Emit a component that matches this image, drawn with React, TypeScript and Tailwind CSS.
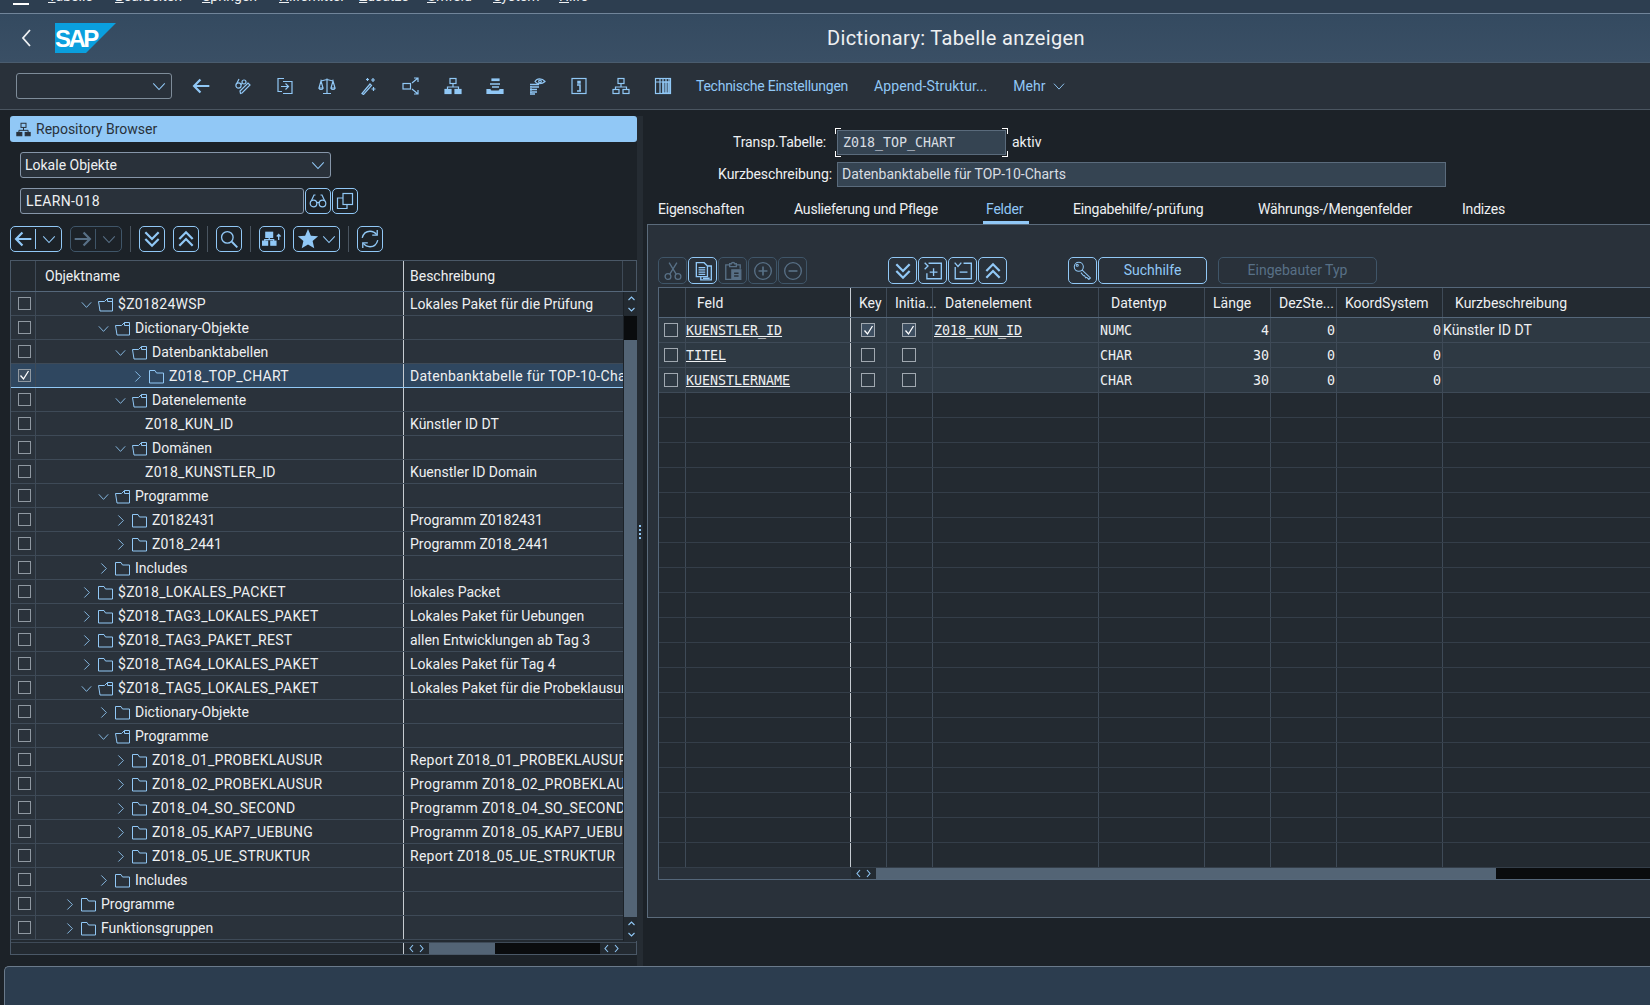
import type { ReactNode } from 'react';

const Svg = ({ children, size = 18, className = '' }: { children: ReactNode; size?: number; className?: string }) => (
  <svg width={size} height={size} viewBox="0 0 18 18" fill="none" stroke="currentColor" strokeWidth="1.2" className={className}>
    {children}
  </svg>
);

const ChevronDown = ({ size = 16 }: { size?: number }) => (
  <Svg size={size}><path d="M2.500 6 9 13l6.500-7" /></Svg>
);
const ChevronRight = () => (
  <Svg size={13}><path d="M6 2l7 7-7 7" /></Svg>
);
const ArrowBack = () => (
  <Svg size={20}><path d="M16.500 9H3M8.500 3.200 2.800 9l5.700 5.800" strokeWidth="2" /></Svg>
);
const ArrowForward = () => (
  <Svg size={20}><path d="M1.500 9H15M9.500 3.200 15.200 9l-5.700 5.800" strokeWidth="2" /></Svg>
);
const DoubleDown = () => (
  <Svg size={20}><path d="M3 3l6 6 6-6M3 9l6 6 6-6" strokeWidth="2" /></Svg>
);
const DoubleUp = () => (
  <Svg size={20}><path d="M3 9l6-6 6 6M3 15l6-6 6 6" strokeWidth="2" /></Svg>
);

const GlassesPencil = () => (
  <Svg>
    <circle cx="4.500" cy="8.500" r="2.600" /><circle cx="10" cy="5" r="2" />
    <path d="M3 6 5 2M7 7.500l1-1M6.500 16.500l1.500-.5 8-8-2-2-8 8z" />
  </Svg>
);
const DocArrow = () => (
  <Svg>
    <path d="M8 1.500H2v13h4M7 4.500h9v12H7" /><path d="M5 9.500h7M9.500 6.500l3 3-3 3" />
  </Svg>
);
const Scales = () => (
  <Svg>
    <path d="M9 1.500V16M5 16.500h8M3 4l6-1.500L15 4M3 4 1 11h4zM15 4l-2 7h4z" />
    <path d="M1 11c.5 2 3.500 2 4 0M13 11c.5 2 3.500 2 4 0" />
  </Svg>
);
const Wand = () => (
  <Svg>
    <path d="M2 16.500 10 7l1.500 1.500-8 9z" />
    <path d="M6 2.500h3M7.500 1v3M13 1v4M11 3h4M13.500 10v4M11.500 12h4" />
  </Svg>
);
const BoxArrows = () => (
  <Svg>
    <rect x="1" y="6.500" width="7.500" height="5.500" /><path d="M10 6l6-5M12 1h4v4M10 12l6 5M12 17h4v-4" />
  </Svg>
);
const Hierarchy = ({ filled = true, size = 18 }: { filled?: boolean; size?: number }) => (
  <Svg size={size}>
    <rect x="6" y="1.500" width="6" height="5" />
    <path d="M9 6.500V10M3.500 12.500V10h11v2.500" />
    <rect x="1" y="12.500" width="6" height="4" fill={filled ? 'currentColor' : 'none'} />
    <rect x="11" y="12.500" width="6" height="4" fill={filled ? 'currentColor' : 'none'} />
  </Svg>
);
const Stack = () => (
  <Svg>
    <rect x="6" y="2" width="7" height="1.500" fill="currentColor" />
    <path d="M4 7h10M6 10h7" strokeWidth="1.600" />
    <path d="M1 12.500h3l1 1.500h8l1-1.500h3V16.500H1z" fill="currentColor" />
  </Svg>
);
const EyeList = () => (
  <Svg>
    <path d="M7 4.500c2-3.500 7-3.500 10 0-3 3-8 3-10 0z" /><circle cx="12" cy="4.500" r="1.300" />
    <path d="M2 7.500h9M2 10h9M2 12.500h7M2 15h7M2 17h5" strokeWidth="1.300" />
    <path d="M3 7v10" strokeDasharray="1 1" />
  </Svg>
);
const InfoBox = () => (
  <Svg>
    <rect x="2" y="1.500" width="14" height="15" />
    <path d="M8 4.500h2v1.500H8zM7 8h3v5.500M7 14h4" strokeWidth="1.500" />
  </Svg>
);
const ColumnsGrid = () => (
  <Svg>
    <rect x="1.500" y="1.500" width="15" height="15" />
    <path d="M6 1.500v15M9 1.500v15M12 1.500v15M15 1.500v15M1.500 5h15" />
    <path d="M9 5h6v11H9z" fill="currentColor" fillOpacity=".45" />
  </Svg>
);
const CopyDoc = () => (
  <Svg>
    <rect x="7" y="1.500" width="9.500" height="11" /><path d="M7 6H1.500v10.500H11V12.500" />
  </Svg>
);
const Glasses = () => (
  <Svg>
    <circle cx="4.500" cy="11.500" r="3.300" /><circle cx="13.500" cy="11.500" r="3.300" />
    <path d="M7.800 11c.7-.8 1.700-.8 2.400 0M2.500 8.500 5 3h1.500M15.500 8.500 13 3h-1.500" />
  </Svg>
);
const Search = () => (
  <Svg size={20}><circle cx="7.500" cy="7.500" r="5.200" /><path d="M11.500 11.500l5 5" strokeWidth="1.700" /></Svg>
);
const HierarchyUp = () => (
  <Svg size={20}>
    <rect x="3.500" y="3" width="6" height="4.500" fill="currentColor" />
    <path d="M6.500 7.500v2M2.500 11V9.500h8V11" />
    <rect x="0.500" y="11" width="4.500" height="3.500" fill="currentColor" />
    <rect x="8" y="11" width="4.500" height="3.500" fill="currentColor" />
    <path d="M15 10V5M13.300 6.800 15 5l1.700 1.800" />
  </Svg>
);
const Star = () => (
  <svg width="22" height="22" viewBox="0 0 20 20" fill="currentColor">
    <path d="M10 1l2.600 6.100 6.600.5-5 4.300 1.500 6.500L10 15l-5.700 3.400 1.500-6.500-5-4.300 6.600-.5z" />
  </svg>
);
const Refresh = () => (
  <Svg size={20}>
    <path d="M2 8C3 4 6 2 9 2c2.500 0 4.500 1 6 3M16 10c-1 4-4 6-7 6-2.500 0-4.500-1-6-3" />
    <path d="M15.500 1v4.500H11M2.500 17v-4.500H7" />
  </Svg>
);
const Scissors = () => (
  <Svg size={20}>
    <circle cx="4.500" cy="14" r="2.600" /><circle cx="13.500" cy="14" r="2.600" />
    <path d="M6 12 12.500 1.500M12 12 5.500 1.500" />
  </Svg>
);
const CopyLines = () => (
  <Svg size={20}>
    <path d="M3 4.500V1.500h7l3 3V14H3z" fill="#29313a" /><path d="M13 4.500h3.500V17H7v-3" />
    <path d="M5 6h6M5 8h6M5 10h6M5 12h6M9 15.500h6" />
  </Svg>
);
const Clipboard = () => (
  <Svg size={20}>
    <path d="M6 3.500H2.500V16.500H8M12 3.500h3.500V7" /><path d="M6 5V2.500h1.500c0-1.500 3-1.500 3 0H12V5z" />
    <rect x="8" y="8" width="8" height="8.500" fill="currentColor" /><path d="M10 11h4M10 13.500h4" stroke="#29313a" />
  </Svg>
);
const CirclePlus = () => (
  <Svg size={20}><circle cx="9" cy="9" r="7.500" /><path d="M5 9h8M9 5v8" strokeWidth="1.500" /></Svg>
);
const CircleMinus = () => (
  <Svg size={20}><circle cx="9" cy="9" r="7.500" /><path d="M5 9h8" strokeWidth="1.500" /></Svg>
);
const BoxPlus = () => (
  <Svg size={20}>
    <path d="M1.500 1.500l3 3-3 3M5 2h11.500v14H3.500v-5" /><path d="M6 10h7M9.500 6.500v7" />
  </Svg>
);
const BoxMinus = () => (
  <Svg size={20}>
    <path d="M1.500 1.500 4.500 5l3-3.500M9.500 2h7v14H2V5.500" /><path d="M6 10h7" />
  </Svg>
);
const KeyIcon = () => (
  <svg width="19" height="19" viewBox="0 0 18 18" fill="none" stroke="currentColor" strokeWidth="1">
    <circle cx="5.500" cy="5.500" r="4.300" /><circle cx="4" cy="4" r="1" />
    <path d="M8.500 8.500l8 7.500-1.500 1.500-2-2-1 .5-1-2-1 0-2.500-3" />
  </svg>
);
const FolderClosed = () => (
  <svg width="15" height="15" viewBox="0 0 15 15" fill="none" stroke="#91c8f6" strokeWidth="1">
    <path d="M.500 1.500h5.500l1.500 2.500h7v10H.500z" />
  </svg>
);
const FolderOpen = () => (
  <svg width="15" height="15" viewBox="0 0 15 15" fill="none" stroke="#91c8f6" strokeWidth="1">
    <path d="M2 14 .500 4.500h6l3-3h5V14z" /><path d="M9.500 1.500V4.500h5" />
  </svg>
);

const CheckBox = ({ checked = false, big = false }: { checked?: boolean; big?: boolean }) => (
  <span className={`flex items-center justify-center border ${big ? 'h-[14px] w-[14px] border-[#a0a8b0]' : 'h-[13px] w-[13px] border-[#8f98a1]'} ${checked ? 'bg-[#3d4e60] text-white' : ''}`}>
    {checked && (
      <svg width="11" height="11" viewBox="0 0 11 11" fill="none" stroke="currentColor" strokeWidth="1.300"><path d="M1.500 5.500 4.500 9 9.500 1" /></svg>
    )}
  </span>
);

const IconBtn = ({ children, w = 'w-[27px]', off = false, h = 'h-[26px]' }: { children: ReactNode; w?: string; off?: boolean; h?: string }) => (
  <span className={`flex shrink-0 items-center justify-center rounded-[5px] border ${h} ${w} ${off ? 'border-[#3f5568] text-[#587086]' : 'border-[#91c8f6] text-[#91c8f6]'}`}>
    {children}
  </span>
);

const Sep = () => <span className="mx-[8px] block h-[26px] w-px bg-[#4a5560]" />;

type TreeRow = { name: string; desc?: string; level: number; state: 'open' | 'closed' | 'leaf'; selected?: boolean };

const treeRows: TreeRow[] = [
  { name: '$Z01824WSP', desc: 'Lokales Paket für die Prüfung', level: 1, state: 'open' },
  { name: 'Dictionary-Objekte', level: 2, state: 'open' },
  { name: 'Datenbanktabellen', level: 3, state: 'open' },
  { name: 'Z018_TOP_CHART', desc: 'Datenbanktabelle für TOP-10-Charts', level: 4, state: 'closed', selected: true },
  { name: 'Datenelemente', level: 3, state: 'open' },
  { name: 'Z018_KUN_ID', desc: 'Künstler ID DT', level: 3, state: 'leaf' },
  { name: 'Domänen', level: 3, state: 'open' },
  { name: 'Z018_KUNSTLER_ID', desc: 'Kuenstler ID Domain', level: 3, state: 'leaf' },
  { name: 'Programme', level: 2, state: 'open' },
  { name: 'Z0182431', desc: 'Programm Z0182431', level: 3, state: 'closed' },
  { name: 'Z018_2441', desc: 'Programm Z018_2441', level: 3, state: 'closed' },
  { name: 'Includes', level: 2, state: 'closed' },
  { name: '$Z018_LOKALES_PACKET', desc: 'lokales Packet', level: 1, state: 'closed' },
  { name: '$Z018_TAG3_LOKALES_PAKET', desc: 'Lokales Paket für Uebungen', level: 1, state: 'closed' },
  { name: '$Z018_TAG3_PAKET_REST', desc: 'allen Entwicklungen ab Tag 3', level: 1, state: 'closed' },
  { name: '$Z018_TAG4_LOKALES_PAKET', desc: 'Lokales Paket für Tag 4', level: 1, state: 'closed' },
  { name: '$Z018_TAG5_LOKALES_PAKET', desc: 'Lokales Paket für die Probeklausur', level: 1, state: 'open' },
  { name: 'Dictionary-Objekte', level: 2, state: 'closed' },
  { name: 'Programme', level: 2, state: 'open' },
  { name: 'Z018_01_PROBEKLAUSUR', desc: 'Report Z018_01_PROBEKLAUSUR', level: 3, state: 'closed' },
  { name: 'Z018_02_PROBEKLAUSUR', desc: 'Programm Z018_02_PROBEKLAUSUR', level: 3, state: 'closed' },
  { name: 'Z018_04_SO_SECOND', desc: 'Programm Z018_04_SO_SECOND', level: 3, state: 'closed' },
  { name: 'Z018_05_KAP7_UEBUNG', desc: 'Programm Z018_05_KAP7_UEBUNG', level: 3, state: 'closed' },
  { name: 'Z018_05_UE_STRUKTUR', desc: 'Report Z018_05_UE_STRUKTUR', level: 3, state: 'closed' },
  { name: 'Includes', level: 2, state: 'closed' },
  { name: 'Programme', level: 0, state: 'closed' },
  { name: 'Funktionsgruppen', level: 0, state: 'closed' },
];

// capitals run wider in the original font
const caps = (s?: string) => (s && /[A-Z]{3}/.test(s) ? 'tracking-[0.28px]' : '');

const fieldCols = 'grid grid-cols-[27px_165px_36px_46px_166px_106px_66px_66px_106px_1fr]';
const fieldRows = [
  { feld: 'KUENSTLER_ID', on: true, el: 'Z018_KUN_ID', typ: 'NUMC', len: '4', dez: '0', koord: '0', text: 'Künstler ID DT' },
  { feld: 'TITEL', on: false, el: '', typ: 'CHAR', len: '30', dez: '0', koord: '0', text: '' },
  { feld: 'KUENSTLERNAME', on: false, el: '', typ: 'CHAR', len: '30', dez: '0', koord: '0', text: '' },
];

const menuItems = [
  ['T', 'abelle', 'w-[67px]'],
  ['B', 'earbeiten', 'w-[87px]'],
  ['S', 'pringen', 'w-[77px]'],
  ['H', 'ilfsmittel', 'w-[80px]'],
  ['Z', 'usätze', 'w-[68px]'],
  ['U', 'mfeld', 'w-[66px]'],
  ['S', 'ystem', 'w-[66px]'],
  ['H', 'ilfe', 'w-[60px]'],
];

const Scroller = () => (
  <span className="flex h-[24px] w-[14px] flex-col items-center justify-center bg-[#232a31] text-[#91c8f6]">
    <svg width="9" height="20" viewBox="0 0 9 20" fill="none" stroke="currentColor" strokeWidth="1.100">
      <path d="M1.500 6l3-3 3 3M1.500 14l3 3 3-3" />
    </svg>
  </span>
);
const HArrows = ({ w }: { w: string }) => (
  <span className={`flex h-full items-center justify-center bg-[#232a31] text-[#91c8f6] ${w}`}>
    <svg width="15" height="9" viewBox="0 0 15 9" fill="none" stroke="currentColor" strokeWidth="1.100">
      <path d="M4 1 1 4.500 4 8M11 1l3 3.500L11 8" />
    </svg>
  </span>
);

export default function App() {
  return (
    <div className="flex h-[1005px] w-[1650px] flex-col overflow-hidden bg-[#1c2228] font-['Roboto',sans-serif] text-[14px] text-[#eef0f2]">
      {/* menu bar, scrolled off at the top */}
      <div className="flex h-[14px] shrink-0 overflow-hidden border-b border-[#71859a] bg-[#2d3e50] pl-[13px]">
        <div className="-mt-[13px] flex h-[18px] items-end">
          <span className="mr-[19px] h-[2px] w-[16px] bg-white" />
          {menuItems.map(([a, b, w], i) => (
            <span key={i} className={`${w} shrink-0 leading-[18px]`}><u>{a}</u>{b}</span>
          ))}
        </div>
      </div>

      {/* shell header */}
      <div className="flex h-[49px] shrink-0 items-center border-b border-[#4a5c6e] bg-gradient-to-b from-[#344a60] to-[#3a4f65] pl-[20px]">
        <svg width="14" height="20" viewBox="0 0 14 20" fill="none" stroke="#eef0f2" strokeWidth="1.800" className="mr-[21px]">
          <path d="M10 2 3 10l7 8" />
        </svg>
        <svg width="61" height="30" viewBox="0 0 61 30" className="shrink-0">
          <polygon points="0,0 61,0 31,30 0,30" fill="#0a9fde" />
          <text x="0" y="24" fill="#fff" fontFamily="Liberation Sans" fontWeight="700" fontSize="24" letterSpacing="-2.500">SAP</text>
        </svg>
        <span className="ml-[711px] text-[20px] tracking-[0.36px]">Dictionary: Tabelle anzeigen</span>
      </div>

      {/* application toolbar */}
      <div className="flex h-[47px] shrink-0 items-center border-b border-[#4a5560] bg-[#29313a] pl-[16px] text-[#91c8f6]">
        <span className="mr-[19px] flex h-[26px] w-[156px] items-center justify-end rounded-[3px] border border-[#7e8c99] pr-[4px]"><ChevronDown /></span>
        <div className="flex items-center gap-[24px]">
          <span className="-mr-px"><ArrowBack /></span>
          <GlassesPencil />
          <DocArrow />
          <Scales />
          <Wand />
          <BoxArrows />
          <Hierarchy />
          <Stack />
          <EyeList />
          <InfoBox />
          <Hierarchy filled={false} />
          <ColumnsGrid />
        </div>
        <span className="ml-[24px] tracking-[-0.25px]">Technische Einstellungen</span>
        <span className="ml-[26px] tracking-[0.1px]">Append-Struktur...</span>
        <span className="ml-[26px]">Mehr</span>
        <span className="ml-[7px]"><ChevronDown size={14} /></span>
      </div>

      {/* main area */}
      <div className="flex min-h-0 flex-1">
        {/* repository browser */}
        <div className="flex w-[637px] shrink-0 flex-col pl-[10px] pt-[6px]">
          <div className="flex h-[26px] items-center gap-[5px] rounded-[3px] bg-[#91c8f6] pl-[6px] text-[#29313a]">
            <Hierarchy size={15} />
            <span>Repository Browser</span>
          </div>
          <div className="ml-[10px] mt-[10px] flex h-[26px] w-[311px] items-center justify-between rounded-[3px] border border-[#8696a9] bg-[#29313a] pl-[4px] pr-[4px]">
            <span>Lokale Objekte</span>
            <span className="text-[#91c8f6]"><ChevronDown /></span>
          </div>
          <div className="ml-[10px] mt-[10px] flex h-[26px]">
            <span className="flex w-[284px] items-center rounded-[3px] border border-[#8696a9] bg-[#29313a] pl-[5px] tracking-[0.35px]">LEARN-018</span>
            <span className="ml-[1px]"><IconBtn w="w-[26px]"><Glasses /></IconBtn></span>
            <span className="ml-[1px]"><IconBtn w="w-[26px]"><CopyDoc /></IconBtn></span>
          </div>
          <div className="mt-[12px] flex h-[26px] items-center">
            <span className="flex h-[26px] w-[52px] items-center rounded-[5px] border border-[#91c8f6] text-[#91c8f6]">
              <span className="flex w-[25px] justify-center border-r border-[#91c8f6]"><ArrowBack /></span>
              <span className="flex flex-1 justify-center"><ChevronDown /></span>
            </span>
            <span className="ml-[8px] flex h-[26px] w-[52px] items-center rounded-[5px] border border-[#3f5568] text-[#587086]">
              <span className="flex w-[25px] justify-center border-r border-[#3f5568]"><ArrowForward /></span>
              <span className="flex flex-1 justify-center"><ChevronDown /></span>
            </span>
            <Sep />
            <IconBtn w="w-[26px]"><DoubleDown /></IconBtn>
            <span className="ml-[8px]"><IconBtn w="w-[26px]"><DoubleUp /></IconBtn></span>
            <Sep />
            <IconBtn w="w-[26px]"><Search /></IconBtn>
            <Sep />
            <IconBtn w="w-[26px]"><HierarchyUp /></IconBtn>
            <span className="ml-[8px] flex h-[26px] w-[47px] items-center justify-center gap-[2px] rounded-[5px] border border-[#91c8f6] text-[#91c8f6]"><Star /><ChevronDown /></span>
            <Sep />
            <IconBtn w="w-[26px]"><Refresh /></IconBtn>
          </div>

          <div className="mt-[8px] flex h-[695px] flex-col border border-[#4a5867] bg-[#232a31]">
            <div className="flex h-[31px] shrink-0 border-b border-[#55677a]">
              <span className="w-[25px] border-r border-[#3e4a57]" />
              <span className="flex w-[368px] items-center border-r border-[#c5cbd1] pl-[9px] pt-[1px]">Objektname</span>
              <span className="flex w-[219px] items-center border-r border-[#3e4a57] pl-[6px] pt-[1px]">Beschreibung</span>
            </div>
            <div className="flex min-h-0 flex-1">
              <div className="w-[612px] shrink-0">
                {treeRows.map((row, i) => (
                  <div key={i} className={`flex h-[24px] border-b ${row.selected ? 'border-[#91c8f6] bg-[#2f4760]' : 'border-[#3e4a57] bg-[#2a323b]'}`}>
                    <span className="flex w-[25px] shrink-0 items-center border-r border-[#3e4a57] pl-[7px]"><CheckBox checked={row.selected} /></span>
                    <span className="flex w-[368px] shrink-0 items-center border-r border-[#c5cbd1] pt-[1px]" style={{ paddingLeft: 27 + 17 * row.level }}>
                      {row.state === 'leaf' ? (
                        <span className={`ml-[31px] block whitespace-nowrap ${caps(row.name)}`}>{row.name}</span>
                      ) : (
                        <>
                          <span className="flex w-[13px] shrink-0 justify-center text-[#91c8f6]">{row.state === 'open' ? <ChevronDown size={13} /> : <ChevronRight />}</span>
                          <span className="mx-[5px] flex shrink-0">{row.state === 'open' ? <FolderOpen /> : <FolderClosed />}</span>
                          <span className={`whitespace-nowrap ${caps(row.name)}`}>{row.name}</span>
                        </>
                      )}
                    </span>
                    <span className={`flex-1 self-center overflow-hidden whitespace-nowrap pl-[6px] pt-[1px] ${caps(row.desc)}`}>{row.desc}</span>
                  </div>
                ))}
              </div>
              <div className="flex w-[14px] shrink-0 flex-col border-l border-[#1c2228] bg-[#536475]">
                <Scroller />
                <span className="h-[24px] shrink-0 bg-[#0a0c0e]" />
                <span className="flex-1" />
                <Scroller />
              </div>
            </div>
            <div className="mt-[1px] flex h-[12px] shrink-0 border-t border-[#3e4a57]">
              <span className="w-[393px] border-r border-[#c5cbd1]" />
              <HArrows w="w-[25px]" />
              <span className="h-full w-[66px] bg-[#536475]" />
              <span className="h-full w-[105px] bg-[#0a0c0e]" />
              <HArrows w="w-[23px]" />
            </div>
          </div>
        </div>

        {/* splitter */}
        <div className="mt-[6px] flex w-[10px] shrink-0">
          <div className="flex w-[6px] flex-col items-center justify-center gap-[2px] bg-[#252c33] pb-[18px]">
            <span className="h-[2px] w-[2px] bg-[#91c8f6]" />
            <span className="h-[2px] w-[2px] bg-[#91c8f6]" />
            <span className="h-[2px] w-[2px] bg-[#91c8f6]" />
            <span className="h-[2px] w-[2px] bg-[#91c8f6]" />
          </div>
        </div>

        {/* table display */}
        <div className="flex min-w-0 flex-1 flex-col pt-[20px]">
          <div className="flex h-[25px] items-center">
            <span className="w-[190px] pr-[11px] text-right tracking-[-0.1px]">Transp.Tabelle:</span>
            <span className="relative flex h-[25px] w-[169px] items-center border border-[#5a6b7c] bg-[#354452] pl-[5px] pt-[1px] font-['DejaVu_Sans_Mono',monospace] text-[13.3px] text-[#d8dde2]">
              Z018_TOP_CHART
              <span className="absolute -left-[3px] -top-[3px] h-[6px] w-[6px] border-l border-t border-white" />
              <span className="absolute -right-[3px] -top-[3px] h-[6px] w-[6px] border-r border-t border-white" />
              <span className="absolute -bottom-[3px] -left-[3px] h-[6px] w-[6px] border-b border-l border-white" />
              <span className="absolute -bottom-[3px] -right-[3px] h-[6px] w-[6px] border-b border-r border-white" />
            </span>
            <span className="ml-[6px]">aktiv</span>
          </div>
          <div className="mt-[7px] flex h-[25px] items-center">
            <span className="w-[190px] pr-[5px] text-right tracking-[-0.1px]">Kurzbeschreibung:</span>
            <span className="flex h-[25px] w-[609px] items-center border border-[#5a6b7c] bg-[#354452] pl-[4px] text-[#d8dde2]">Datenbanktabelle für TOP-10-Charts</span>
          </div>

          <div className="mt-[5px] flex h-[32px] shrink-0 items-start pl-[11px] pt-[7px] tracking-[-0.2px]">
            <span className="w-[136px]">Eigenschaften</span>
            <span className="w-[189px]">Auslieferung und Pflege</span>
            <span className="relative w-[90px] pl-[3px] text-[#91c8f6]">
              Felder
              <span className="absolute left-0 top-[22px] h-[3px] w-[46px] bg-[#91c8f6]" />
            </span>
            <span className="w-[185px]">Eingabehilfe/-prüfung</span>
            <span className="w-[204px]">Währungs-/Mengenfelder</span>
            <span>Indizes</span>
          </div>

          <div className="flex h-[694px] shrink-0 flex-col border-b border-l border-t border-[#5b6b7b] bg-[#29313a] pl-[10px] pt-[32px]">
            <div className="flex h-[27px] shrink-0 items-center">
              <div className="flex w-[230px] gap-px">
                <IconBtn off w="w-[29px]" h="h-[27px]"><Scissors /></IconBtn>
                <IconBtn w="w-[29px]" h="h-[27px]"><CopyLines /></IconBtn>
                <IconBtn off w="w-[29px]" h="h-[27px]"><Clipboard /></IconBtn>
                <IconBtn off w="w-[29px]" h="h-[27px]"><CirclePlus /></IconBtn>
                <IconBtn off w="w-[29px]" h="h-[27px]"><CircleMinus /></IconBtn>
              </div>
              <div className="flex w-[180px] gap-px">
                <IconBtn w="w-[29px]" h="h-[27px]"><DoubleDown /></IconBtn>
                <IconBtn w="w-[29px]" h="h-[27px]"><BoxPlus /></IconBtn>
                <IconBtn w="w-[29px]" h="h-[27px]"><BoxMinus /></IconBtn>
                <IconBtn w="w-[29px]" h="h-[27px]"><DoubleUp /></IconBtn>
              </div>
              <IconBtn w="w-[29px]" h="h-[27px]"><KeyIcon /></IconBtn>
              <span className="ml-px flex h-[27px] w-[109px] items-center justify-center rounded-[5px] border border-[#91c8f6] text-[#91c8f6]">Suchhilfe</span>
              <span className="ml-[11px] flex h-[27px] w-[159px] items-center justify-center rounded-[5px] border border-[#3f5568] text-[#587086]">Eingebauter Typ</span>
            </div>

            <div className="mt-[3px] flex h-[593px] shrink-0 flex-col border-b border-l border-t border-[#55677a] bg-[#232a31]">
              <div className={`${fieldCols} h-[30px] shrink-0 border-b border-[#55677a]`}>
                <span className="border-r border-[#3e4a57]" />
                <span className="flex items-center border-r border-[#c5cbd1] pl-[11px] pt-[1px]">Feld</span>
                <span className="flex items-center border-r border-[#3e4a57] pl-[8px] pt-[1px]">Key</span>
                <span className="flex items-center border-r border-[#3e4a57] pl-[8px] pt-[1px]">Initia...</span>
                <span className="flex items-center border-r border-[#3e4a57] pl-[12px] pt-[1px]">Datenelement</span>
                <span className="flex items-center border-r border-[#3e4a57] pl-[12px] pt-[1px]">Datentyp</span>
                <span className="flex items-center border-r border-[#3e4a57] pl-[8px] pt-[1px]">Länge</span>
                <span className="flex items-center border-r border-[#3e4a57] pl-[8px] pt-[1px]">DezSte...</span>
                <span className="flex items-center border-r border-[#3e4a57] pl-[8px] pt-[1px]">KoordSystem</span>
                <span className="flex items-center pl-[12px] pt-[1px]">Kurzbeschreibung</span>
              </div>
              {fieldRows.map((r) => (
                <div key={r.feld} className={`${fieldCols} h-[25px] shrink-0 border-b border-[#3e4a57] bg-[#2e3943] font-['DejaVu_Sans_Mono',monospace] text-[13.3px]`}>
                  <span className="flex items-center border-r border-[#3e4a57] pl-[5px]"><CheckBox big /></span>
                  <span className="flex items-center border-r border-[#c5cbd1] pt-[1px] underline">{r.feld}</span>
                  <span className="flex items-center border-r border-[#3e4a57] pl-[10px]"><CheckBox big checked={r.on} /></span>
                  <span className="flex items-center border-r border-[#3e4a57] pl-[15px]"><CheckBox big checked={r.on} /></span>
                  <span className="flex items-center border-r border-[#3e4a57] pl-[1px] pt-[1px] underline">{r.el}</span>
                  <span className="flex items-center border-r border-[#3e4a57] pl-[1px] pt-[1px]">{r.typ}</span>
                  <span className="flex items-center justify-end border-r border-[#3e4a57] pr-[1px] pt-[1px]">{r.len}</span>
                  <span className="flex items-center justify-end border-r border-[#3e4a57] pr-[1px] pt-[1px]">{r.dez}</span>
                  <span className="flex items-center justify-end border-r border-[#3e4a57] pr-[1px] pt-[1px]">{r.koord}</span>
                  <span className="flex items-center font-['Roboto',sans-serif] text-[14px]">{r.text}</span>
                </div>
              ))}
              {Array.from({ length: 19 }).map((_, i) => (
                <div key={i} className={`${fieldCols} h-[25px] shrink-0 border-b border-[#343e49]`}>
                  <span className="border-r border-[#3e4a57]" />
                  <span className="border-r border-[#c5cbd1]" />
                  <span className="border-r border-[#3e4a57]" />
                  <span className="border-r border-[#3e4a57]" />
                  <span className="border-r border-[#3e4a57]" />
                  <span className="border-r border-[#3e4a57]" />
                  <span className="border-r border-[#3e4a57]" />
                  <span className="border-r border-[#3e4a57]" />
                  <span className="border-r border-[#3e4a57]" />
                  <span />
                </div>
              ))}
              <div className="flex min-h-0 flex-1">
                <span className="w-[192px] bg-[#29313a]" />
                <HArrows w="w-[25px]" />
                <span className="h-full w-[620px] bg-[#536475]" />
                <span className="h-full flex-1 bg-[#0a0c0e]" />
              </div>
            </div>
          </div>
        </div>
      </div>

      {/* status bar */}
      <div className="ml-[4px] h-[39px] shrink-0 rounded-tl-[5px] border-l border-t border-[#6a7a8b] bg-[#2c3d4f]" />
    </div>
  );
}
